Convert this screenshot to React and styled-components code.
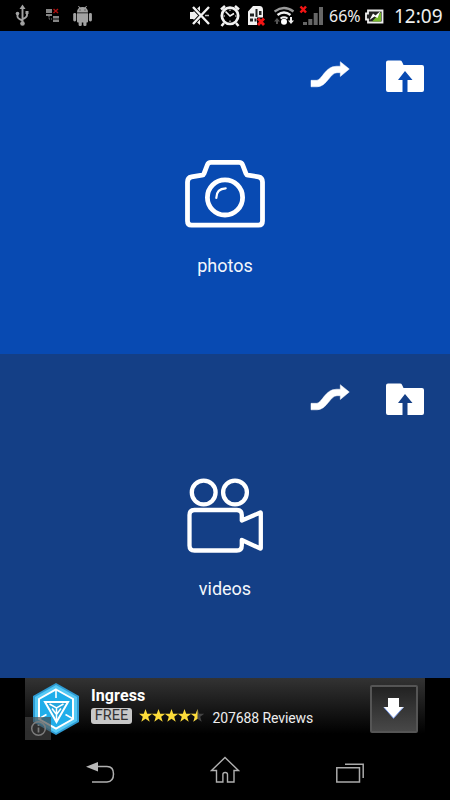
import React from 'react'
import styled, { createGlobalStyle } from 'styled-components'

const GlobalStyle = createGlobalStyle`
  * {
    box-sizing: border-box;
  }
  body {
    margin: 0;
    background: #000;
    font-family: Roboto, 'Liberation Sans', sans-serif;
  }
  svg {
    display: block;
    flex: none;
  }
`

// every icon is drawn in screen units, box = [x, y, width, height]
const Icon = ({ box, children }) => (
  <svg viewBox={box.join(' ')} width={box[2]} height={box[3]} fill='none'>
    {children}
  </svg>
)

const StatusBar = () => (
  <Status>
    <StatusGroup $gap='16px'>
      <Icon box={[15, 4, 14, 23]}>
        <g stroke='#a2a2a2' strokeWidth='1.900'>
          <path d='M22.500 8v15M17.500 13.500v3q0 2 5 4M27 12v3q0 2.500-4.500 4' />
        </g>
        <g fill='#a2a2a2'>
          <path d='M22.500 4.500l3 4.500h-6z' />
          <circle cx='22.500' cy='23.500' r='2.300' />
          <circle cx='17.500' cy='13.500' r='1.800' />
          <path d='M25.500 11h3v3h-3z' />
        </g>
      </Icon>
      <Icon box={[45, 4, 15, 23]}>
        <path d='M46 9h6v4h-6zM46 14h6v2h-6zM53 16h6v2.500h-6zM53 19.500h6v2.500h-6z' fill='#858585' />
        <path d='M49 16v3h3' stroke='#858585' strokeDasharray='1.500 1' />
        <path d='M53.500 9l4.500 4M58 9l-4.500 4' stroke='#ad1010' strokeWidth='1.500' />
      </Icon>
      <Icon box={[73, 4, 20, 23]}>
        <g fill='#a2a2a2'>
          <path d='M77 12.500q0-5.500 5.500-5.500t5.500 5.500z' />
          <path d='M77 13.300h11v8.200q0 1-1 1H78q-1 0-1-1z' />
          <rect x='73.200' y='13' width='3' height='8.500' rx='1.400' />
          <rect x='88.900' y='13' width='3' height='8.500' rx='1.400' />
          <rect x='78.600' y='20' width='3.200' height='6' rx='1.300' />
          <rect x='83.300' y='20' width='3.200' height='6' rx='1.300' />
        </g>
        <path d='M78.500 6l1.500 2.500M86.500 6l-1.500 2.500' stroke='#a2a2a2' />
        <path d='M79.500 10h1M84.500 10h1' stroke='#222' />
      </Icon>
    </StatusGroup>
    <StatusGroup $gap='8px'>
      <Icon box={[189, 4, 22, 23]}>
        <path d='M190 12h3l7-6v19l-7-6h-3z' fill='#eee' />
        <path d='M192 6l18 19M210 6l-18 19' stroke='#000' strokeWidth='4' />
        <path d='M193 7l16 17M209 7l-16 17' stroke='#f2f2f2' strokeWidth='2.400' />
        <path d='M205 15.500h4' stroke='#bbb' strokeWidth='1.500' />
      </Icon>
      <Icon box={[219, 4, 22, 23]}>
        <g stroke='#f2f2f2'>
          <circle cx='230' cy='15.800' r='8.200' strokeWidth='2.700' />
          <path d='M225.500 11.500l4.500 4.500 4-2.500' strokeWidth='1.700' />
          <path d='M221 9.500l4-3.500M239 9.500l-4-3.500M224 23l-2.500 3M236 23l2.500 3' strokeWidth='2.500' />
          <path d='M230 9.500v1.500M230 20.500v1.500M223.500 16h1.500M235 16h1.500' />
        </g>
      </Icon>
      <Icon box={[247, 4, 19, 23]}>
        <path d='M248 11.500l5-5.500h6.500q3.500 0 3.500 4v7.500h-6V25h-9z' fill='#f2f2f2' />
        <path d='M250 13.500h4v3h-4zM255.500 9h2v8h-2zM259 11h2.500v4H259zM250 18.500h3v3h-3zM254.500 18.500h2v3h-2z' fill='#222' />
        <path d='M258 18.500l6 6.500M264 18.500l-6 6.500' stroke='#f31414' strokeWidth='2.800' />
      </Icon>
      <Icon box={[274, 4, 21, 23]}>
        <path d='M274.500 11.500q9.500-7 19 0' stroke='#999' strokeWidth='2.300' />
        <path d='M277.500 15q6.500-5 13 0' stroke='#eee' strokeWidth='2.300' />
        <path d='M280.500 18.500q3.500-2.500 7 0' stroke='#eee' strokeWidth='2' />
        <circle cx='284' cy='21.800' r='3' fill='#fff' />
        <path d='M277 18l3 3.500h-2V24h-2v-2.500h-2z' fill='#555' />
        <path d='M291 24l-3-3.500h2V17h2v3.500h2z' fill='#eee' />
      </Icon>
      <Icon box={[299, 4, 25, 23]}>
        <path d='M303 22h4v3h-4zM308.300 19h4v6h-4zM313.700 13h4v12h-4zM319 7h4v18h-4z' fill='#666' />
        <path d='M300.500 6.500l5.500 6M306 6.500l-5.500 6' stroke='#f31414' strokeWidth='2.500' />
      </Icon>
      <Percent>66%</Percent>
      <Icon box={[364, 4, 20, 23]}>
        <path d='M368 10.500h14.500v12H368v-3h-2v-6h2z' fill='#222' stroke='#eee' strokeWidth='1.800' />
        <path d='M381 12v9.500h-9z' fill='#76b82a' />
        <path d='M369.500 20l3.500-6.500 2.500 2 5-4.500-3 7-3-1.500z' fill='#fff' />
      </Icon>
      <Clock>12:09</Clock>
    </StatusGroup>
  </Status>
)

const Actions = () => (
  <ActionRow>
    <Icon box={[310, 60, 40, 33]}>
      <path
        d='M311 80.300h5.500C322 80.300 325 66.200 336.500 66.200H340.300V61.700l9 7.300-9 7.500V72.700H337C330 72.700 327 86.800 317 86.800H311z'
        fill='#fff'
        stroke='#fff'
        strokeWidth='.5'
      />
    </Icon>
    <Icon box={[386, 60, 38, 33]}>
      <path
        d='M388 60.500h12q1.500 0 2 1.300l1.500 3.200H422q2 0 2 2v23q0 2-2 2h-14.500V80h5L405 71l-7 9h4.500v12H388q-2 0-2-2V62.500q0-2 2-2z'
        fill='#fff'
      />
    </Icon>
  </ActionRow>
)

const CameraIcon = () => (
  <Icon box={[185, 155, 80, 75]}>
    <g stroke='#fff' strokeLinejoin='round'>
      <path
        d='M187.500 182q0-4.500 4-5.200l10.500-1.600q1.500-.3 2-1.600l3.300-8.600q1-2.600 3.700-2.600h28q2.700 0 3.700 2.600l3.300 8.600q.5 1.300 2 1.600l10.500 1.600q4 .7 4 5.200V221q0 4.200-4 4.200h-67q-4 0-4-4.200z'
        strokeWidth='4.800'
      />
      <circle cx='225' cy='197.400' r='17.600' strokeWidth='4.800' />
      <path d='M216.300 198q0-9.300 9.400-9.600' strokeWidth='2.200' strokeLinecap='round' />
    </g>
  </Icon>
)

const VideoIcon = () => (
  <Icon box={[185, 478, 80, 75]}>
    <g stroke='#fff' strokeWidth='4.300' strokeLinejoin='round'>
      <circle cx='203.700' cy='492.500' r='11.900' />
      <circle cx='235' cy='492.500' r='11.900' />
      <path d='M241.800 520.500V515q0-5-5-5h-42.300q-5 0-5 5v30.500q0 5 5 5h42.300q5 0 5-5V540l18.500 8.500q.5.200.5-.5v-35q0-.7-.5-.5z' />
    </g>
  </Icon>
)

const sections = [
  { id: 'photos', color: '#084ab2', icon: <CameraIcon /> },
  { id: 'videos', color: '#143f86', icon: <VideoIcon /> },
]

const star = 'M6.500 0l1.700 4.700h5L9.200 7.800l1.500 5L6.500 9.800l-4.200 3 1.500-5L-.2 4.700h5z'

const Stars = () => (
  <svg width='66' height='13' viewBox='0 0 66 13'>
    {[0, 1, 2, 3, 4].map((n) => (
      <path key={n} d={star} transform={`translate(${n * 13} 0)`} fill={n === 4 ? '#444' : '#fddc3a'} />
    ))}
    <path d='M58.500 0v9.800l-4.200 3 1.500-5-4-3.100h5z' fill='#fddc3a' />
  </svg>
)

const IngressLogo = () => (
  <Icon box={[33, 683, 46, 52]}>
    <path d='M56 683l23 13v26l-23 13-23-13v-26z' fill='#2e9bd3' />
    <path d='M56 685l21 12v24l-21 12-21-12v-24z' fill='#55c9f5' />
    <path d='M56 689.500l17 9.500v20l-17 9.500-17-9.500v-20z' fill='#20aeea' stroke='#fff' strokeWidth='2' />
    <path d='M56 689v9M39.500 718.500l7-4M72.500 718.500l-7-4' stroke='#fff' strokeWidth='1.600' />
    <path d='M45 702h23l-11.500 20z' fill='#27a7dd' stroke='#fff' strokeWidth='2' />
    <path d='M49.500 704l7 4 7-4M56.500 708v12M52 708.500l4.500 6 4.500-6' stroke='#fff' strokeWidth='1.500' />
  </Icon>
)

const AdBanner = () => (
  <Banner>
    <IngressLogo />
    <InfoTag>
      <Icon box={[30, 719, 17, 17]}>
        <circle cx='38.500' cy='727.500' r='6.800' stroke='#7c7c7c' strokeWidth='1.500' />
        <path d='M38.500 723.500v1.600M38.500 726.500v5' stroke='#7c7c7c' strokeWidth='1.700' />
      </Icon>
    </InfoTag>
    <AdInfo>
      <AdTitle>Ingress</AdTitle>
      <AdMeta>
        <Price>FREE</Price>
        <Stars />
        <Reviews>207688 Reviews</Reviews>
      </AdMeta>
    </AdInfo>
    <Download>
      <Icon box={[383, 697, 22, 23]}>
        <path d='M388 698h11v9h5l-10.500 11.500L383.500 707h4.500z' fill='#fff' />
        <path d='M384 707.500l9.500 10.800 9.500-10.800' stroke='#5d87e8' strokeWidth='.8' />
      </Icon>
    </Download>
  </Banner>
)

const NavBar = () => (
  <Nav>
    <Icon box={[85, 756, 30, 28]}>
      <path d='M97 766.500h10q6.500 0 6.500 7.500t-6.500 8H92' stroke='#b0b0b0' strokeWidth='1.500' />
      <path d='M86 766.700l12-4.700v9.400z' fill='#b8b8b8' />
    </Icon>
    <Icon box={[210, 756, 30, 28]}>
      <path
        d='M225 757.500l13.500 13H234V782h-6.500v-7.500q0-2-2.300-2t-2.300 2V782h-6.400v-11.500h-5z'
        stroke='#b0b0b0'
        strokeWidth='1.400'
      />
    </Icon>
    <Icon box={[335, 756, 30, 28]}>
      <path d='M336.800 767.800h22.700v14.200h-22.700zM345 764.200h18.200V778' stroke='#aaa' strokeWidth='1.500' />
    </Icon>
  </Nav>
)

const App = () => {
  return (
    <>
      <GlobalStyle />
      <Screen>
        <StatusBar />
        {sections.map(({ id, color, icon }) => (
          <Section key={id} $color={color}>
            <Actions />
            <Tile>
              {icon}
              <Label>{id}</Label>
            </Tile>
          </Section>
        ))}
        <AdBanner />
        <NavBar />
      </Screen>
    </>
  )
}

const Screen = styled.div`
  display: flex;
  flex-direction: column;
  width: 450px;
  height: 800px;
  overflow: hidden;
  background: #000;
`
const Status = styled.header`
  display: flex;
  justify-content: space-between;
  height: 31px;
  padding: 4px 8px 0 15px;
`
const StatusGroup = styled.div`
  display: flex;
  align-items: flex-start;
  gap: ${(props) => props.$gap};
  svg:nth-child(3) {
    margin-left: ${(props) => (props.$gap === '16px' ? '-3px' : '-2px')};
  }
  svg:nth-child(5) {
    margin-left: -4px;
  }
`
const Percent = styled.span`
  width: 32px;
  margin-left: -3px;
  margin-right: -5px;
  color: #eee;
  font: 16px/25px 'Noto Sans', sans-serif;
`
const Clock = styled.span`
  width: 48px;
  margin-left: 2px;
  color: #eee;
  font: 19px/25px 'Noto Sans', sans-serif;
`
const Section = styled.section`
  height: 323.400px;
  flex: none;
  padding-top: 29px;
  background: ${(props) => props.$color};
`
const ActionRow = styled.div`
  display: flex;
  justify-content: flex-end;
  gap: 36px;
  padding-right: 26px;
`
const Tile = styled.div`
  display: flex;
  flex-direction: column;
  align-items: center;
  padding-top: 62px;
`
const Label = styled.div`
  margin-top: 25px;
  color: #f4f7fc;
  font-size: 18px;
  line-height: 22px;
`
const Banner = styled.div`
  position: relative;
  display: flex;
  width: 400px;
  height: 62.200px;
  flex: none;
  margin: 0 auto;
  padding: 5px 7px 0 8px;
  background: linear-gradient(#333, #000 90%);
`
const InfoTag = styled.div`
  position: absolute;
  left: 0;
  bottom: 0;
  display: flex;
  align-items: center;
  justify-content: center;
  width: 26px;
  height: 23px;
  background: rgba(70, 70, 70, 0.65);
`
const AdInfo = styled.div`
  flex: 1;
  padding: 3px 0 0 12px;
`
const AdTitle = styled.div`
  color: #fff;
  font-size: 16px;
  font-weight: 700;
  line-height: 20px;
  letter-spacing: 0.1px;
`
const AdMeta = styled.div`
  display: flex;
  align-items: center;
`
const Price = styled.span`
  width: 41px;
  height: 16px;
  margin-right: 7px;
  border-radius: 3px;
  background: #c8c8c8;
  color: #333;
  font-size: 14.500px;
  line-height: 16px;
  text-align: center;
`
const Reviews = styled.span`
  margin: 4px 0 0 7.500px;
  color: #eee;
  font-size: 14px;
  line-height: 16px;
  letter-spacing: -0.1px;
  white-space: nowrap;
`
const Download = styled.div`
  display: flex;
  align-items: center;
  justify-content: center;
  width: 48px;
  height: 48px;
  margin-top: 2px;
  border: 2px solid #555;
  border-radius: 2px;
  background: linear-gradient(#222, #484848);
`
const Nav = styled.nav`
  display: flex;
  justify-content: space-between;
  padding: 16px 85px 0;
`

export default App
